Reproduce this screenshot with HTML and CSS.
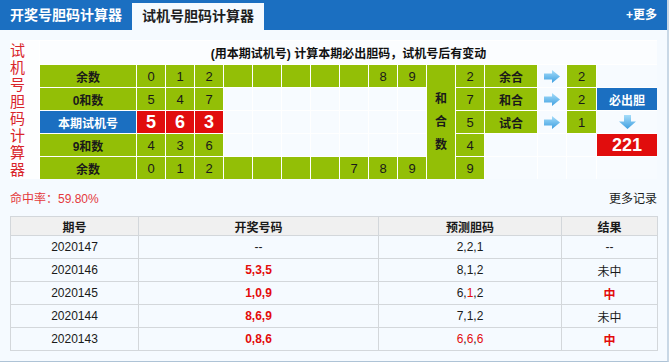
FILE: index.html
```html
<!DOCTYPE html>
<html lang="zh-CN">
<head>
<meta charset="utf-8">
<title>试机号胆码计算器</title>
<link rel="stylesheet" href="styles.css">
</head>
<body>
<div class="box">
  <div class="hdr">
    <div class="tab">开奖号胆码计算器</div>
    <div class="tab on">试机号胆码计算器</div>
    <a class="more">+更多</a>
  </div>
  <div class="body">
    <div class="calc">
      <div class="v">试<br>机<br>号<br>胆<br>码<br>计<br>算<br>器</div>
      <div class="t">(用本期试机号) 计算本期必出胆码，试机号后有变动</div>
      <div class="g lb hs">和<br>合<br>数</div>

      <div class="g lb">余数</div>
      <div class="g">0</div><div class="g">1</div><div class="g">2</div><div class="g"></div><div class="g"></div><div class="g"></div><div class="g"></div><div class="g"></div><div class="g">8</div><div class="g">9</div>
      <div class="g">2</div><div class="g lb">余合</div>
      <div class="e"><svg class="ar" viewBox="0 0 16 13"><defs><linearGradient id="ga" x1="0" y1="0" x2="0" y2="1"><stop offset="0" stop-color="#a6ddfa"/><stop offset="1" stop-color="#3e9fe0"/></linearGradient></defs><path d="M0 3.5H8V0L16 6.5L8 13V9.5H0Z" fill="url(#ga)"/></svg></div>
      <div class="g">2</div><div class="e"></div>

      <div class="g lb">0和数</div>
      <div class="g">5</div><div class="g">4</div><div class="g">7</div><div class="e"></div><div class="e"></div><div class="e"></div><div class="e"></div><div class="e"></div><div class="e"></div><div class="e"></div>
      <div class="g">7</div><div class="g lb">和合</div>
      <div class="e"><svg class="ar" viewBox="0 0 16 13"><path d="M0 3.5H8V0L16 6.5L8 13V9.5H0Z" fill="url(#ga)"/></svg></div>
      <div class="g">2</div><div class="b lb">必出胆</div>

      <div class="b lb">本期试机号</div>
      <div class="r">5</div><div class="r">6</div><div class="r">3</div><div class="e"></div><div class="e"></div><div class="e"></div><div class="e"></div><div class="e"></div><div class="e"></div><div class="e"></div>
      <div class="g">5</div><div class="g lb">试合</div>
      <div class="e"><svg class="ar" viewBox="0 0 16 13"><path d="M0 3.5H8V0L16 6.5L8 13V9.5H0Z" fill="url(#ga)"/></svg></div>
      <div class="g">1</div>
      <div class="e"><svg class="ad" viewBox="0 0 17 14"><path d="M5 0H12V6.5H17L8.5 14L0 6.5H5Z" fill="url(#ga)"/></svg></div>

      <div class="g lb">9和数</div>
      <div class="g">4</div><div class="g">3</div><div class="g">6</div><div class="e"></div><div class="e"></div><div class="e"></div><div class="e"></div><div class="e"></div><div class="e"></div><div class="e"></div>
      <div class="g">4</div><div class="e"></div><div class="e"></div><div class="e"></div><div class="r">221</div>

      <div class="g lb">余数</div>
      <div class="g">0</div><div class="g">1</div><div class="g">2</div><div class="g"></div><div class="g"></div><div class="g"></div><div class="g"></div><div class="g">7</div><div class="g">8</div><div class="g">9</div>
      <div class="g">9</div><div class="e"></div><div class="e"></div><div class="e"></div><div class="e"></div>
    </div>

    <div class="info">
      <span class="rate">命中率：59.80%</span>
      <a class="rec">更多记录</a>
    </div>

    <table class="hist">
      <colgroup><col class="c1"><col class="c2"><col class="c3"><col class="c4"></colgroup>
      <thead>
        <tr><th>期号</th><th>开奖号码</th><th>预测胆码</th><th>结果</th></tr>
      </thead>
      <tbody>
        <tr><td>2020147</td><td>--</td><td>2,2,1</td><td>--</td></tr>
        <tr><td>2020146</td><td class="kj">5,3,5</td><td>8,1,2</td><td>未中</td></tr>
        <tr><td>2020145</td><td class="kj">1,0,9</td><td>6,<span class="hit">1</span>,2</td><td class="zh">中</td></tr>
        <tr><td>2020144</td><td class="kj">8,6,9</td><td>7,1,2</td><td>未中</td></tr>
        <tr><td>2020143</td><td class="kj">0,8,6</td><td><span class="hit">6</span>,<span class="hit">6</span>,<span class="hit">6</span></td><td class="zh">中</td></tr>
      </tbody>
    </table>
  </div>
</div>
</body>
</html>
```
FILE: styles.css
```css
html, body {
  margin: 0;
  padding: 0;
  background: #ffffff;
}
body {
  font-family: "Liberation Sans", "Noto Sans CJK SC", sans-serif;
  font-size: 12px;
  color: #222;
}
.box {
  width: 667px;
  height: 361px;
  background: #f5faff;
  border-right: 2px solid #c9d8e6;
  border-bottom: 1px solid #aec3d6;
  overflow: hidden;
}
.hdr {
  display: flex;
  height: 30px;
  background: #1b6fc1;
}
.tab {
  width: 132px;
  text-align: center;
  color: #fff;
  font-size: 14px;
  font-weight: bold;
  line-height: 30px;
}
.tab.on {
  margin-top: 3px;
  height: 27px;
  line-height: 26px;
  background: #f5faff;
  color: #1e1e1e;
}
.more {
  margin-left: auto;
  padding-right: 10px;
  color: #fff;
  font-weight: bold;
  font-size: 12px;
  line-height: 31px;
}
.body {
  padding: 10px 10px 0 10px;
}
.calc {
  display: grid;
  grid-template-columns: 29px 96px repeat(10, 28px) 28px 28px 52px 28px 29px 60px;
  grid-template-rows: 23px repeat(5, 22px);
  gap: 1px;
  padding-top: 1px;
  background: #ffffff;
  width: 647px;
}
.calc > div {
  display: flex;
  align-items: center;
  justify-content: center;
  font-size: 13px;
  color: #1a1a1a;
}
.calc > .v {
  grid-column: 1;
  grid-row: 1 / 7;
  justify-content: flex-start;
  background: #fdfeff;
  color: #d9252b;
  font-size: 15px;
  line-height: 17px;
  text-align: left;
}
.calc > .t {
  grid-column: 2 / 19;
  grid-row: 1;
  background: #fbfdff;
  font-size: 12px;
  font-weight: bold;
  color: #111;
}
.calc > .hs {
  grid-column: 13;
  grid-row: 2 / 7;
  line-height: 23px;
  text-align: center;
}
.calc > .g { background: #93bf06; }
.calc > .e { background: #f7fbff; }
.calc > .b {
  background: #1b6fc1;
  color: #fff;
}
.calc > .r {
  background: #e10d0d;
  color: #fff;
  font-size: 18px;
  font-weight: bold;
}
.calc > .lb {
  font-size: 12px;
  font-weight: bold;
}
.ar { width: 16px; height: 13px; }
.ad { width: 17px; height: 14px; }
.info {
  display: flex;
  justify-content: space-between;
  width: 647px;
  margin-top: 11px;
  line-height: 18px;
  height: 18px;
}
.rate { color: #e4393c; }
.rec { color: #1a1a1a; }
.hist {
  margin-top: 8px;
  width: 647px;
  table-layout: fixed;
  border-collapse: collapse;
}
.c1 { width: 128px; }
.c2 { width: 240px; }
.c3 { width: 183px; }
.c4 { width: 96px; }
.hist th, .hist td {
  border: 1px solid #d3d7db;
  padding: 0;
  text-align: center;
  font-size: 12px;
}
.hist th {
  height: 18px;
  background: #f0f0f0;
  font-weight: bold;
  color: #1a1a1a;
}
.hist td {
  height: 22px;
  color: #1a1a1a;
}
.hist td.kj {
  color: #e30b0b;
  font-weight: bold;
}
.hist .hit { color: #e30b0b; }
.hist td.zh {
  color: #e30b0b;
  font-weight: bold;
}
```
